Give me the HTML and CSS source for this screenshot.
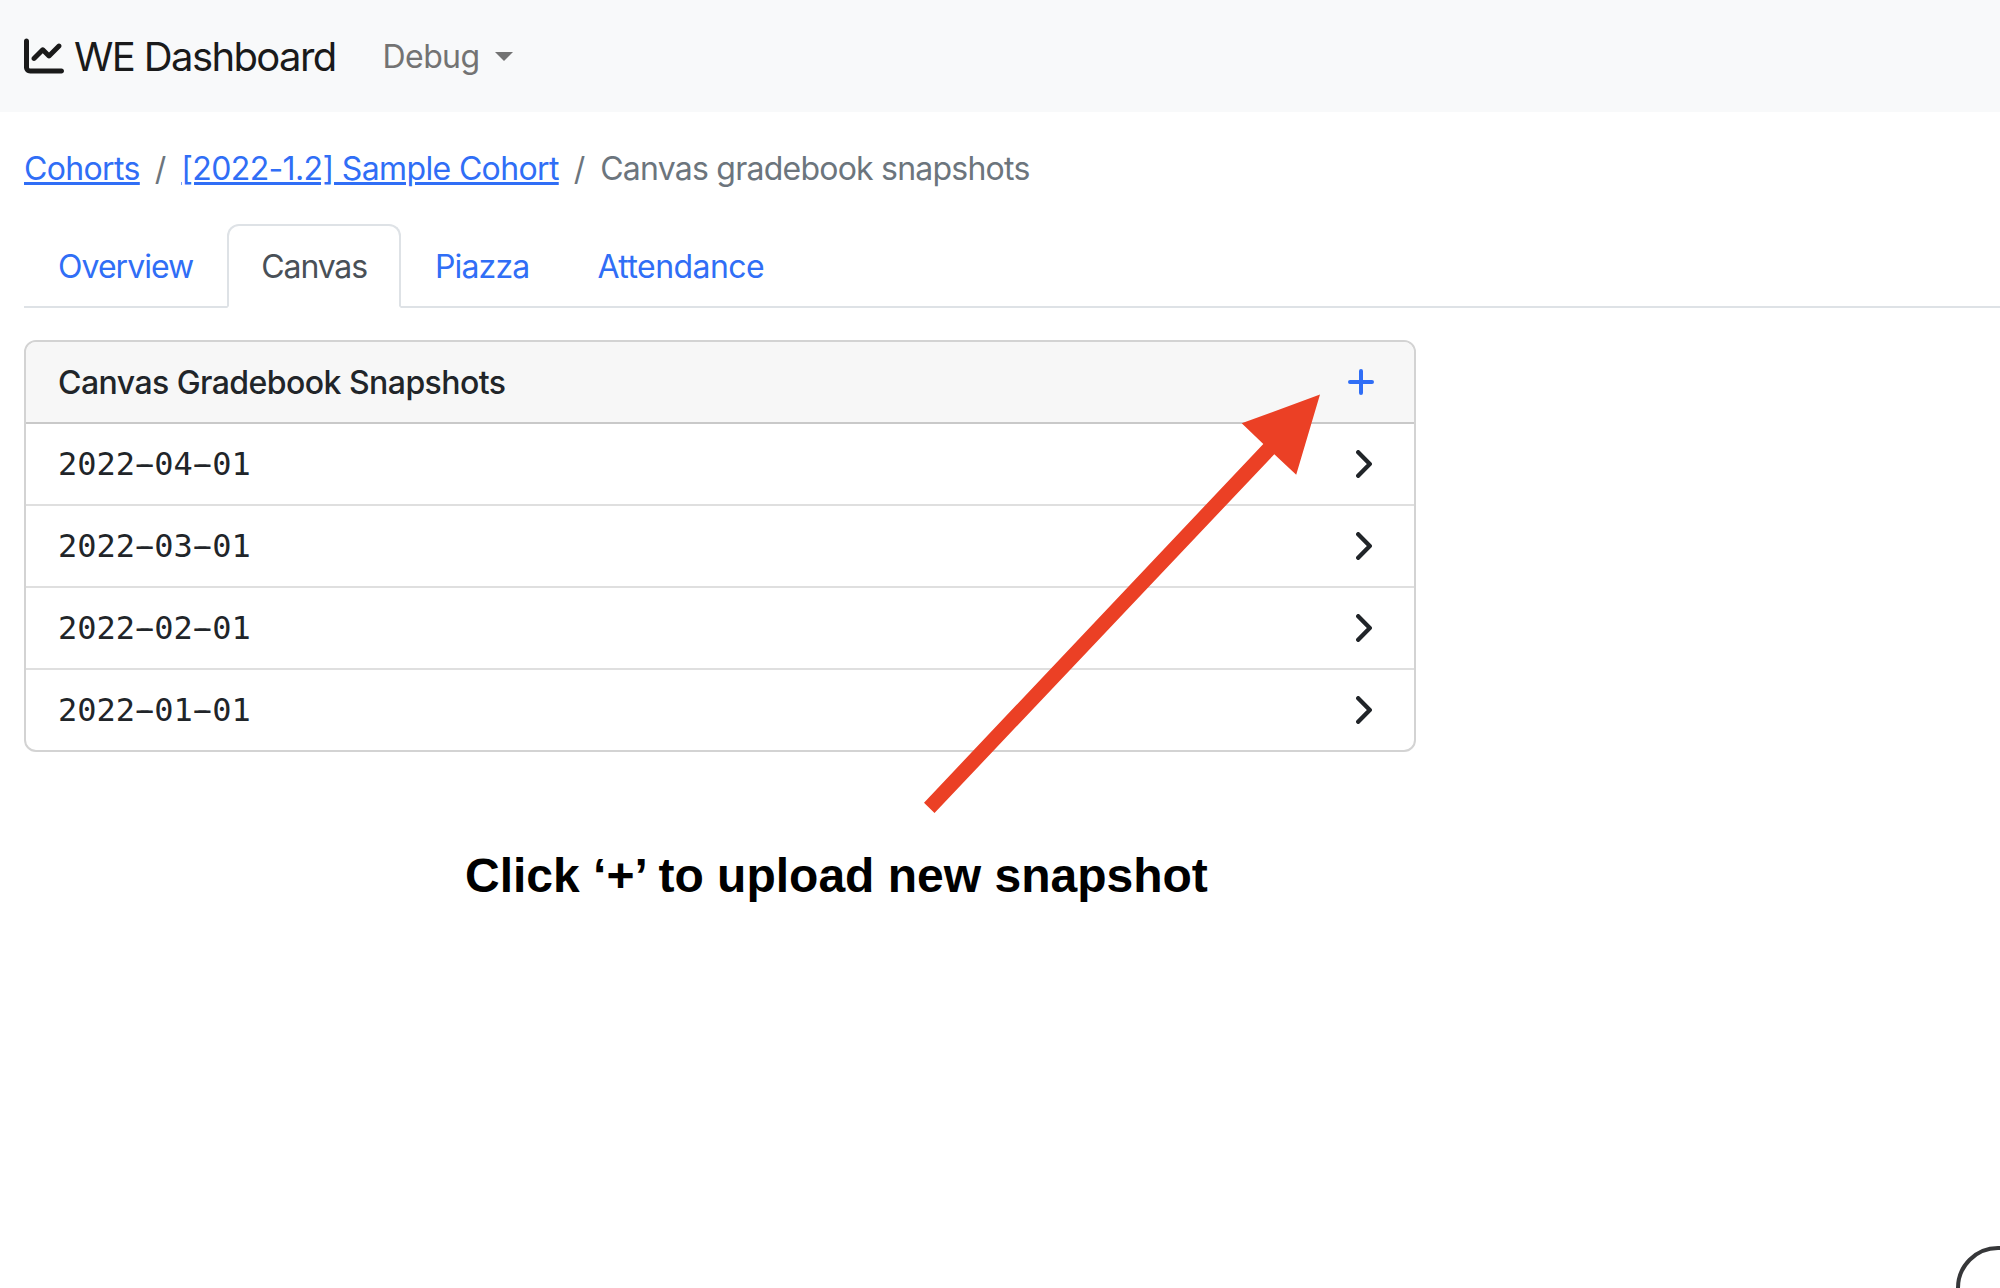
FILE: index.html
```html
<!DOCTYPE html>
<html lang="en">
<head>
<meta charset="utf-8">
<title>WE Dashboard</title>
<link rel="stylesheet" href="styles.css">
</head>
<body>
<header class="navbar">
  <a class="brand"><svg class="brand-icon" viewBox="0 0 512 512"><path d="M64 64c0-17.700-14.300-32-32-32S0 46.300 0 64V400c0 44.200 35.800 80 80 80H480c17.700 0 32-14.300 32-32s-14.300-32-32-32H80c-8.800 0-16-7.200-16-16V64zm406.600 86.600c12.500-12.500 12.500-32.800 0-45.300s-32.800-12.500-45.300 0L320 210.700l-57.400-57.400c-12.500-12.500-32.800-12.500-45.300 0l-112 112c-12.500 12.500-12.500 32.800 0 45.300s32.800 12.500 45.300 0L240 221.300l57.400 57.400c12.500 12.500 32.800 12.500 45.300 0l128-128z"/></svg><span class="brand-text">WE Dashboard</span></a>
  <a class="nav-menu"><span class="nav-label">Debug</span><span class="caret"></span></a>
</header>
<main>
  <nav class="breadcrumb"><a class="crumb">Cohorts</a><span class="sep">/</span><a class="crumb">[2022-1.2] Sample Cohort</a><span class="sep">/</span><span class="crumb-current">Canvas gradebook snapshots</span></nav>
  <nav class="tabs">
    <a class="tab">Overview</a>
    <a class="tab active">Canvas</a>
    <a class="tab piazza">Piazza</a>
    <a class="tab attendance">Attendance</a>
  </nav>
  <section class="card">
    <div class="card-header"><span class="card-title">Canvas Gradebook Snapshots</span><svg class="plus" viewBox="0 0 26 26"><path d="M13 2v22M2 13h22"/></svg></div>
    <a class="row"><span class="date">2022<i>-</i>04<i>-</i>01</span><svg class="chevron" viewBox="0 0 16 28"><path d="M2.200 2.200 13.800 14 2.200 25.800"/></svg></a>
    <a class="row"><span class="date">2022<i>-</i>03<i>-</i>01</span><svg class="chevron" viewBox="0 0 16 28"><path d="M2.200 2.200 13.800 14 2.200 25.800"/></svg></a>
    <a class="row"><span class="date">2022<i>-</i>02<i>-</i>01</span><svg class="chevron" viewBox="0 0 16 28"><path d="M2.200 2.200 13.800 14 2.200 25.800"/></svg></a>
    <a class="row"><span class="date">2022<i>-</i>01<i>-</i>01</span><svg class="chevron" viewBox="0 0 16 28"><path d="M2.200 2.200 13.800 14 2.200 25.800"/></svg></a>
  </section>
  <p class="note">Click ‘+’ to upload new snapshot</p>
</main>
<svg class="arrow" viewBox="0 0 400 422"><path d="M398 .5 319.700 29.300 341.300 50 2 408.700 12.500 419 352.300 60.300 374.200 80.700z"/></svg>
<div class="bubble"></div>
</body>
</html>
```
FILE: styles.css
```css
* { box-sizing: border-box; }
html, body { height: 100%; }
body { margin: 0; position: relative; overflow: hidden; background: #fff; color: #212529; font: 32px/48px Inter, sans-serif; }
.navbar { height: 112px; padding-left: 24px; background: #f8f9fa; display: flex; align-items: center; }
.brand { display: flex; align-items: center; gap: 10px; font-size: 40px; color: #1a1a1a; }
.brand-icon { width: 40px; height: 40px; fill: currentColor; }
.brand-text { padding-top: 2px; letter-spacing: -1.620px; }
.nav-menu { margin-left: 47px; display: flex; align-items: center; gap: 16px; color: #737373; }
.nav-label { padding-top: 2px; letter-spacing: -.6px; }
.caret { border: 9.600px solid transparent; border-top-color: currentColor; border-bottom: 0; }
main { padding-left: 24px; }
.breadcrumb { height: 112px; padding-top: 33px; display: flex; color: #6c757d; }
.crumb { color: #306ef6; letter-spacing: -.640px; text-decoration: underline; text-decoration-thickness: 3px; }
.crumb-current { letter-spacing: -.770px; }
.sep { padding: 0 15px; }
.tabs { height: 84px; border-bottom: 2px solid #dee2e6; display: flex; }
.tab { height: 84px; padding: 17px 32px 15px; border: 2px solid transparent; border-radius: 12px 12px 0 0; color: #306ef6; letter-spacing: -.960px; }
.tab.active { color: #495057; background: #fff; border-color: #dee2e6 #dee2e6 #fff; letter-spacing: -1.150px; }
.tab.piazza { letter-spacing: -.830px; }
.tab.attendance { letter-spacing: -.550px; }
.card { width: 1392px; margin-top: 32px; border: 2px solid #d3d3d3; border-radius: 12px; overflow: hidden; }
.card-header { height: 82px; padding: 0 40px 0 32px; background: #f7f7f7; border-bottom: 2px solid #c9c9c9; display: flex; align-items: center; justify-content: space-between; font-weight: 500; }
.card-title { padding-top: 2px; letter-spacing: -.550px; }
.plus { width: 26px; height: 26px; fill: none; stroke: #306ef6; stroke-width: 4; stroke-linecap: round; }
.row { height: 82px; padding: 0 42px 0 32px; border-bottom: 2px solid #dfdfdf; display: flex; align-items: center; justify-content: space-between; }
.row:last-child { height: 80px; border-bottom: 0; }
.date { font-family: "DejaVu Sans Mono", monospace; }
.date i { font-style: normal; text-shadow: -4px 0 currentColor, 4px 0 currentColor; }
.chevron { width: 16px; height: 28px; fill: none; stroke: #212529; stroke-width: 4.300; stroke-linecap: round; stroke-linejoin: round; }
.note { margin: 96px 0 0 441px; color: #000; font: bold 48px/56px "Liberation Sans", sans-serif; }
.arrow { position: absolute; left: 922px; top: 394px; width: 400px; height: 422px; fill: #eb4025; }
.bubble { position: absolute; left: 1956px; top: 1246px; width: 84px; height: 84px; border: 4px solid #363739; border-radius: 50%; }
```
